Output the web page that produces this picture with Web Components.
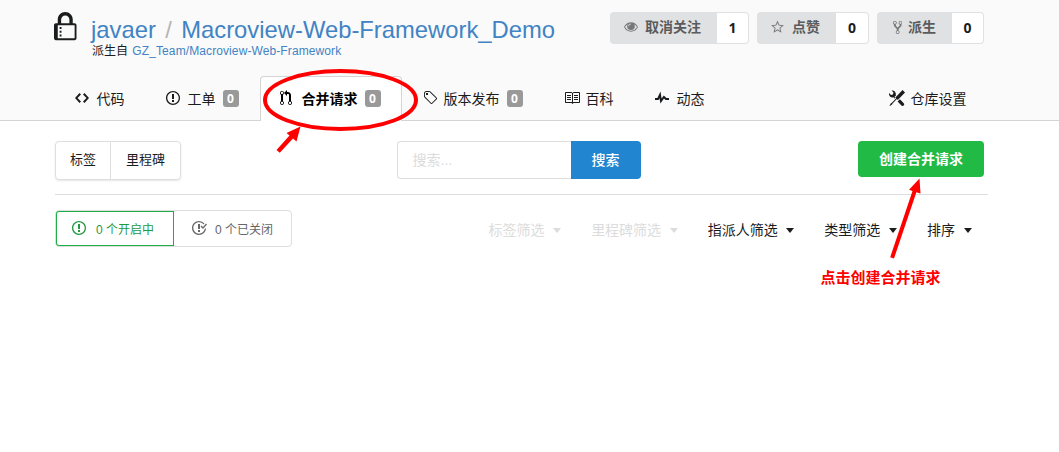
<!DOCTYPE html>
<html lang="zh-CN">
<head>
<meta charset="utf-8">
<title>javaer / Macroview-Web-Framework_Demo</title>
<style>
html,body{margin:0;padding:0;background:#fff}
body{width:1059px;height:452px;overflow:hidden;font-family:"Liberation Sans","Noto Sans CJK SC",sans-serif;font-size:14px;color:#1b1c1d}
</style>
</head>
<body>
<repo-page></repo-page>
<script>
const define = (name, css, html, setup) => customElements.define(name, class extends HTMLElement {
  constructor() {
    super();
    const t = document.createElement('template');
    t.innerHTML = `<style>*{box-sizing:border-box}:host{box-sizing:border-box}${css}</style>${html}`;
    this.attachShadow({mode: 'open'}).append(t.content.cloneNode(true));
  }
  connectedCallback() { if (setup) setup(this, this.shadowRoot); }
});

const ICONS = {
  lock: [12, 'M4 13H3v-1h1v1zm8-6v7c0 .55-.45 1-1 1H1c-.55 0-1-.45-1-1V7c0-.55.45-1 1-1h1V4c0-2.2 1.8-4 4-4s4 1.8 4 4v2h1c.55 0 1 .45 1 1zM3.8 6h4.41V4c0-1.22-.98-2.2-2.2-2.2-1.22 0-2.2.98-2.2 2.2v2H3.8zM11 7H2v7h9V7zM4 8H3v1h1V8zm0 2H3v1h1v-1z'],
  code: [14, 'M9.5 3L8 4.5 11.5 8 8 11.5 9.5 13 14 8 9.5 3zm-5 0L0 8l4.5 5L6 11.5 2.5 8 6 4.5 4.5 3z'],
  issue: [14, 'M7 2.3c3.14 0 5.7 2.56 5.7 5.7s-2.56 5.7-5.7 5.7A5.71 5.71 0 0 1 1.3 8c0-3.14 2.56-5.7 5.7-5.7zM7 1C3.14 1 0 4.14 0 8s3.14 7 7 7 7-3.14 7-7-3.14-7-7-7zm1 3H6v5h2V4zm0 6H6v2h2v-2z'],
  closed: [16, 'M7 10h2v2H7v-2zm2-6H7v5h2V4zm1.5 1.5l-1 1L12 9l4-4.5-1-1L12 7l-1.5-1.5zM8 13.7A5.71 5.71 0 0 1 2.3 8c0-3.14 2.56-5.7 5.7-5.7 1.83 0 3.45.88 4.5 2.2l.92-.92A6.947 6.947 0 0 0 8 1C4.14 1 1 4.14 1 8s3.14 7 7 7 7-3.14 7-7l-1.52 1.52c-.66 2.41-2.86 4.19-5.48 4.19v-.01z'],
  pull: [12, 'M11 11.28V5c-.03-.78-.34-1.47-.94-2.06C9.46 2.35 8.78 2.03 8 2H7V0L4 3l3 3V4h1c.27.02.48.11.69.31.21.2.3.42.31.69v6.28A1.993 1.993 0 0 0 10 15a1.993 1.993 0 0 0 1-3.72zm-1 2.92c-.66 0-1.2-.55-1.2-1.2 0-.65.55-1.2 1.2-1.2.65 0 1.2.55 1.2 1.2 0 .65-.55 1.2-1.2 1.2zM4 3c0-1.11-.89-2-2-2a1.993 1.993 0 0 0-1 3.72v6.56A1.993 1.993 0 0 0 2 15a1.993 1.993 0 0 0 1-3.72V4.72c.59-.34 1-.98 1-1.72zm-.8 10c0 .66-.55 1.2-1.2 1.2-.65 0-1.2-.55-1.2-1.2 0-.65.55-1.2 1.2-1.2.65 0 1.2.55 1.2 1.2zM2 4.2C1.34 4.2.8 3.65.8 3c0-.65.55-1.2 1.2-1.2.65 0 1.2.55 1.2 1.2 0 .65-.55 1.2-1.2 1.2z'],
  tag: [14, 'M7.73 1.73C7.26 1.26 6.62 1 5.96 1H3.5C2.13 1 1 2.13 1 3.5v2.47c0 .66.27 1.3.73 1.77l6.06 6.06c.39.39 1.02.39 1.41 0l4.59-4.59a.996.996 0 0 0 0-1.41L7.73 1.73zM2.38 7.09c-.31-.3-.47-.7-.47-1.13V3.5c0-.88.72-1.59 1.59-1.59h2.47c.42 0 .83.16 1.13.47l6.14 6.13-4.73 4.73-6.13-6.15zM3.01 3h2v2H3V3h.01z'],
  book: [16, 'M3 5h4v1H3V5zm0 3h4V7H3v1zm0 2h4V9H3v1zm11-5h-4v1h4V5zm0 2h-4v1h4V7zm0 2h-4v1h4V9zm2-6v9c0 .55-.45 1-1 1H9.5l-1 1-1-1H2c-.55 0-1-.45-1-1V3c0-.55.45-1 1-1h5.5l1 1 1-1H15c.55 0 1 .45 1 1zm-8 .5L7.5 3H2v9h6V3.5zm7-.5H9.5l-.5.5V12h6V3z'],
  pulse: [14, 'M11.5 8L8.8 5.4 6.6 8.5 5.5 1.6 2.38 8H0v2h3.6l.9-1.8.9 5.4L9 8.5l1.6 1.5H14V8z'],
  tools: [16, 'M4.48 7.27c.26.26 1.28 1.33 1.28 1.33l.56-.58-.88-.91 1.69-1.8s-.76-.74-.43-.45c.32-1.19.03-2.51-.87-3.44C4.93.5 3.66.2 2.52.51l1.93 2-.51 1.96-1.89.52-1.93-1.99C-.19 4.17.1 5.48 1 6.4c.94.98 2.29 1.26 3.48.87zm6.44 1.94l-2.33 2.3 3.84 3.98c.31.33.73.49 1.14.49.41 0 .82-.16 1.14-.49.63-.65.63-1.7 0-2.35l-3.79-3.93zM16 2.53L13.55 0 6.33 7.46l.88.91-4.31 4.46-.99.53-1.39 2.27.35.37 2.2-1.44.51-1.02L7.9 9.08l.88.91L16 2.53z'],
  fork: [10, 'M8 1a1.993 1.993 0 0 0-1 3.72V6L5 8 3 6V4.72A1.993 1.993 0 0 0 2 1a1.993 1.993 0 0 0-1 3.72V6.5l3 3v1.78A1.993 1.993 0 0 0 5 15a1.993 1.993 0 0 0 1-3.72V9.5l3-3V4.72A1.993 1.993 0 0 0 8 1zM2 4.2C1.34 4.2.8 3.65.8 3c0-.65.55-1.2 1.2-1.2.65 0 1.2.55 1.2 1.2 0 .65-.55 1.2-1.2 1.2zm3 10c-.66 0-1.2-.55-1.2-1.2 0-.65.55-1.2 1.2-1.2.65 0 1.2.55 1.2 1.2 0 .65-.55 1.2-1.2 1.2zm3-10c-.66 0-1.2-.55-1.2-1.2 0-.65.55-1.2 1.2-1.2.65 0 1.2.55 1.2 1.2 0 .65-.55 1.2-1.2 1.2z'],
  eye: [14, 'M7 3.3C3.9 3.3 1.4 5.2 0 8c1.4 2.8 3.9 4.7 7 4.7s5.6-1.900 7-4.700C12.600 5.200 10.100 3.300 7 3.300zM7 11.800C4.400 11.800 2.300 10.400 1 8c.7-1.200 1.600-2.200 2.700-2.800A3.800 3.800 0 0 0 3.200 7.300a3.800 3.800 0 0 0 7.600 0c0-.7-.2-1.500-.5-2.100C11.400 5.800 12.300 6.800 13 8c-1.300 2.400-3.400 3.800-6 3.800zM7 4.600v.7A2 2 0 0 0 5 7.300H4.300A2.700 2.700 0 0 1 7 4.600z'],
  star: [13, 'M6.5 1.5L8.3 5.8 12.9 6.2 9.4 9.3 10.5 13.8 6.5 11.4 2.5 13.8 3.6 9.3.1 6.2 4.7 5.8zM6.5 3.900L5.300 6.600 2.300 6.900 4.600 8.900 3.900 11.900 6.500 10.300 9.100 11.900 8.400 8.900 10.700 6.900 7.700 6.600z']
};

define('oct-icon', ':host{display:block;flex:none}svg{display:block;fill:currentColor}', '<svg></svg>', (el, r) => {
  const [w, d] = ICONS[el.getAttribute('name')];
  const s = +(el.getAttribute('size') || 16);
  const svg = r.querySelector('svg');
  svg.setAttribute('viewBox', `0 0 ${w} 16`);
  svg.setAttribute('width', w * s / 16);
  svg.setAttribute('height', s);
  svg.innerHTML = `<path fill-rule="evenodd" d="${d}"/>`;
});

define('stat-button', `
:host{display:flex;height:32px;font-weight:700}
.l{display:flex;align-items:center;width:var(--lw);padding:0 0 2px var(--pl,14px);gap:var(--gap,7px);background:#e0e1e2;color:#5a5b5c;border-radius:4px 0 0 4px;line-height:16px;white-space:nowrap}
.i{color:#77787a;flex:none}
.c{display:flex;align-items:center;justify-content:center;width:var(--cw);padding-bottom:1px;background:#fff;border:1px solid #e0e1e2;border-left:0;border-radius:0 4px 4px 0;color:#1b1c1d;font-family:"Open Sans","Liberation Sans",sans-serif}`,
'<div class="l"><span class="i"></span><slot></slot></div><div class="c"></div>', (el, r) => {
  r.querySelector('.i').innerHTML = `<oct-icon name="${el.getAttribute('icon')}" size="${el.getAttribute('size') || 16}"></oct-icon>`;
  r.querySelector('.c').textContent = el.getAttribute('count');
});

define('repo-tab', `
:host{display:flex;align-items:center;height:45px;width:var(--w);padding:0 0 0 var(--pl,20px);gap:6.5px;line-height:18px;white-space:nowrap;flex:none}
:host([active]){background:#fff;border:1px solid #d4d4d5;border-bottom:0;border-radius:4px 4px 0 0;padding-bottom:1px;font-weight:700;color:#000}
.i{width:var(--iw,15px);flex:none;margin-top:-1px}
b{display:block;width:16px;height:17px;margin:-1px 0 0 .5px;background:#999;border-radius:3px;color:#fff;font:700 12px/17px "Open Sans","Liberation Sans",sans-serif;text-align:center}
b:empty{display:none}`,
'<span class="i"></span><slot></slot><b></b>', (el, r) => {
  r.querySelector('.i').innerHTML = `<oct-icon name="${el.getAttribute('icon')}"></oct-icon>`;
  r.querySelector('b').textContent = el.getAttribute('badge') || '';
});

define('repo-header', `
:host{display:block;height:121px;background:#fafafa;border-bottom:1px solid #d4d4d5}
.top{display:flex;height:76px;padding:12px 75px 0 54px}
.name{flex:1;padding-left:14.5px}
h1{margin:0;padding-top:3px;font-size:23.8px;font-weight:400;line-height:29px;color:#4183c4;white-space:nowrap}
h1 i{font-style:normal;color:#b5b5b5;padding:0 9.4px}
.fork{font-size:12px;line-height:14px;color:#1b1c1d;margin-left:1px;white-space:nowrap}
.fork a{color:#4183c4;letter-spacing:.1px;margin-left:1px}
.stats{display:flex;gap:8px}
nav{display:flex;height:45px;padding-left:55px}
.end{margin-left:auto;margin-right:73px}`,
`<div class="top"><oct-icon name="lock" size="30"></oct-icon>
<div class="name"><h1>javaer<i>/</i>Macroview-Web-Framework_Demo</h1><div class="fork">派生自 <a>GZ_Team/Macroview-Web-Framework</a></div></div>
<div class="stats">
<stat-button icon="eye" count="1" style="--lw:107px;--cw:32px">取消关注</stat-button>
<stat-button icon="star" count="0" style="--lw:79px;--cw:33px;--gap:8px">点赞</stat-button>
<stat-button icon="fork" count="0" size="15" style="--lw:75px;--cw:32px;--pl:16px;--gap:5.6px">派生</stat-button>
</div></div>
<nav>
<repo-tab icon="code" style="--w:90px">代码</repo-tab>
<repo-tab icon="issue" badge="0" style="--w:115px;--pl:21px">工单</repo-tab>
<repo-tab active icon="pull" badge="0" style="--w:142px;--pl:19px">合并请求</repo-tab>
<repo-tab icon="tag" badge="0" style="--w:142px;--pl:20.5px;--iw:14.5px">版本发布</repo-tab>
<repo-tab icon="book" style="--w:90px;--iw:15px">百科</repo-tab>
<repo-tab icon="pulse" style="--w:92px;--pl:21px">动态</repo-tab>
<repo-tab class="end" icon="tools" style="--w:117px">仓库设置</repo-tab>
</nav>`);

define('button-group', `
:host{display:flex;width:126px;height:39px;border:1px solid #dededf;border-radius:4px;box-shadow:0 1px 2px #0000001a;font-size:13px;line-height:36px;text-align:center}
::slotted(*){flex:none;width:var(--w)}
::slotted(:first-child){border-right:1px solid #dededf}`, '<slot></slot>');

define('search-box', `
:host{display:flex;width:244px;height:38px;line-height:37px;margin-right:2px}
.f{width:174px;border:1px solid #dededf;border-right:0;border-radius:4px 0 0 4px;padding-left:15px;color:#dcdcdc}
.b{width:70px;background:#2185d0;color:#fff;font-weight:500;line-height:38px;text-align:center;border-radius:0 4px 4px 0}`,
'<div class="f">搜索...</div><div class="b">搜索</div>');

define('green-button', `
:host{display:block;width:126px;height:36px;background:#21ba45;color:#fff;font-weight:700;line-height:36px;text-align:center;border-radius:4px}`, '<slot></slot>');

define('state-tabs', `
:host{display:flex;width:237px;height:37px;border:1px solid #dededf;border-radius:4px;font-size:12px;white-space:nowrap}
div{display:flex;align-items:center;gap:10px;color:#666}
.open{width:118px;padding-left:16px;color:#1f9a3f;box-shadow:inset 0 0 0 1px #1eae46;border-radius:3px 0 0 3px}
.done{padding-left:17px;gap:8px}
oct-icon{margin-top:-1px}`,
`<div class="open"><oct-icon name="issue"></oct-icon><span>0 个开启中</span></div>
<div class="done"><oct-icon name="closed"></oct-icon><span>0 个已关闭</span></div>`);

define('filter-menu', `
:host{display:flex;align-items:center;gap:8.6px;line-height:18px;white-space:nowrap}
:host([disabled]){color:#dcdcdc}
i{border:4.5px solid transparent;border-top:5px solid;border-bottom:0}`, '<slot></slot><i></i>');

define('callout-marks', `
:host{position:absolute;inset:0;pointer-events:none}
svg{position:absolute;left:0;top:0}
p{position:absolute;left:820.5px;top:268px;margin:0;color:#f00;font-size:15px;line-height:20px;font-weight:700;white-space:nowrap}`,
`<svg width="1059" height="452" fill="#f00"><ellipse cx="340.5" cy="100" rx="75.5" ry="29" fill="none" stroke="#f00" stroke-width="4"/>
<path d="M276.5 150L289.5 135.5 286.5 133 300.5 126.5 296.5 141.5 293 138.5 279.8 152.8zM890.2 257.2L912.5 191 909 189.8 919.5 178.5 920.5 193.5 916.4 192.2 894 258.5z"/></svg><p>点击创建合并请求</p>`);

define('repo-page', `
:host{display:block;position:relative;width:1059px;height:452px}
main{padding:20px 71px 0 55px}
.bar{display:grid;grid-template-columns:1fr auto 1fr;height:54px;border-bottom:1px solid #dededf;padding-right:4px}
green-button{justify-self:end}
.filters{display:flex;padding-top:15px;align-items:flex-start}
.menus{display:flex;gap:30px;margin:11px 16.5px 0 auto}`,
`<repo-header></repo-header>
<main><div class="bar"><button-group><span style="--w:55px">标签</span><span style="--w:69px">里程碑</span></button-group><search-box></search-box><green-button>创建合并请求</green-button></div>
<div class="filters"><state-tabs></state-tabs><div class="menus">
<filter-menu disabled>标签筛选</filter-menu><filter-menu disabled>里程碑筛选</filter-menu><filter-menu>指派人筛选</filter-menu><filter-menu>类型筛选</filter-menu><filter-menu>排序</filter-menu></div></div></main>
<callout-marks></callout-marks>`);
</script>
</body>
</html>
